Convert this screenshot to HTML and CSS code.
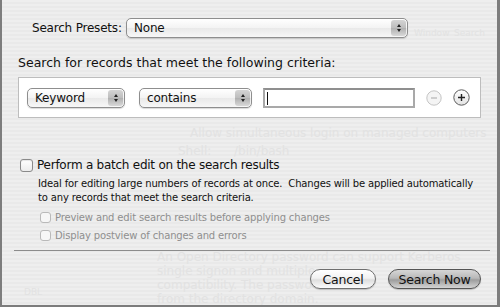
FILE: index.html
```html
<!DOCTYPE html>
<html>
<head>
<meta charset="utf-8">
<link rel="stylesheet" href="styles.css">
</head>
<body>
<div class="sheet">
  <div class="ghost">
    <span class="g g1">Window</span>
    <span class="g g2">Search</span>
    <span class="g g3">Allow simultaneous login on managed computers</span>
    <span class="g g4">Shell:</span>
    <span class="g g5">/bin/bash</span>
    <span class="g g6">An Open Directory password can support Kerberos</span>
    <span class="g g6b">single signon and multiple</span>
    <span class="g g6c">compatibility. The passwo</span>
    <span class="g g6d">from the directory domain.</span>
    <span class="g g7">DBL</span>
  </div>

  <div class="presets">
    <span class="label">Search Presets:</span>
    <div class="popup popup-presets"><span class="ptext">None</span><span class="arrows"><i class="up"></i><i class="down"></i></span></div>
  </div>

  <div class="heading">Search for records that meet the following criteria:</div>

  <div class="criteria">
    <div class="popup popup-keyword"><span class="ptext">Keyword</span><span class="arrows"><i class="up"></i><i class="down"></i></span></div>
    <div class="popup popup-contains"><span class="ptext">contains</span><span class="arrows"><i class="up"></i><i class="down"></i></span></div>
    <div class="field"><span class="caret"></span></div>
    <span class="round minus"><svg viewBox="0 0 16 16" width="16" height="16"><circle cx="8" cy="8" r="7.2" fill="#f4f4f4" stroke="#c4c4c4" stroke-width="1"/><path d="M5 8h6" stroke="#b8b8b8" stroke-width="1.3"/></svg></span>
    <span class="round plus"><svg viewBox="0 0 17 17" width="17" height="17"><defs><linearGradient id="pg" x1="0" y1="0" x2="0" y2="1"><stop offset="0" stop-color="#ffffff"/><stop offset="1" stop-color="#e2e2e2"/></linearGradient></defs><circle cx="8.5" cy="8.5" r="7.7" fill="url(#pg)" stroke="#5c5c5c" stroke-width="1"/><path d="M5 8.5h7M8.5 5v7" stroke="#222" stroke-width="1.4"/></svg></span>
  </div>

  <div class="batch">
    <span class="check big"></span>
    <span class="batch-label">Perform a batch edit on the search results</span>
  </div>
  <p class="desc">Ideal for editing large numbers of records at once.&nbsp; Changes will be applied automatically<br>to any records that meet the search criteria.</p>
  <div class="sub">
    <div class="subrow"><span class="check small"></span><span>Preview and edit search results before applying changes</span></div>
    <div class="subrow"><span class="check small"></span><span>Display postview of changes and errors</span></div>
  </div>

  <div class="sep"></div>

  <div class="buttons">
    <span class="btn cancel">Cancel</span>
    <span class="btn default">Search Now</span>
  </div>
</div>
</body>
</html>
```

FILE: styles.css
```css
* { box-sizing: border-box; }
html, body { margin: 0; padding: 0; }
body {
  width: 500px;
  height: 307px;
  overflow: hidden;
  font-family: "DejaVu Sans", "Liberation Sans", sans-serif;
  color: #111;
}
.sheet {
  position: relative;
  width: 500px;
  height: 307px;
  border-left: 2px solid #7d7d7d;
  border-right: 3px solid #7d7d7d;
  border-bottom: 2px solid #7d7d7d;
  background-color: #ececec;
  background-image: repeating-linear-gradient(180deg, #eeeeee 0, #eeeeee 2px, #e9e9e9 2px, #e9e9e9 4px);
  padding-left: 16px;
  overflow: hidden;
}
.ghost { position: absolute; inset: 0; pointer-events: none; }
.g { position: absolute; color: #e2e2e2; font-size: 12px; line-height: 13px; white-space: nowrap; }
.g1 { left: 412px; top: 28px; font-size: 9px; line-height: 10px; }
.g2 { left: 452px; top: 28px; font-size: 9px; line-height: 10px; }
.g3 { left: 188px; top: 127px; }
.g4 { left: 176px; top: 145px; }
.g5 { left: 232px; top: 145px; }
.g6 { left: 155px; top: 251px; }
.g6b { left: 155px; top: 265px; }
.g6c { left: 155px; top: 279px; }
.g6d { left: 155px; top: 293px; }
.g7 { left: 22px; top: 287px; font-size: 9px; line-height: 10px; }

.presets, .heading, .criteria, .batch, .desc, .sub, .sep, .buttons { position: relative; }

.presets {
  display: flex;
  align-items: center;
  padding-top: 17px;
  padding-left: 14px;
  height: 38px;
}
.label { font-size: 12px; letter-spacing: -0.2px; width: 94px; }

.popup {
  display: flex;
  align-items: center;
  height: 20px;
  border: 1px solid #8e8e8e;
  border-radius: 5px;
  background: linear-gradient(#ffffff, #f3f3f3 50%, #e9e9e9 51%, #f7f7f7);
  box-shadow: 0 1px 1px rgba(0,0,0,0.15);
  font-size: 12px;
  letter-spacing: -0.2px;
  overflow: hidden;
}
.ptext { flex: 1; padding-left: 7px; }
.arrows {
  width: 15px;
  height: 16px;
  margin-right: 1px;
  border-radius: 3px;
  background: linear-gradient(#d4d4d4, #bdbdbd 50%, #b0b0b0 51%, #d8d8d8);
  display: flex;
  flex-direction: column;
  align-items: center;
  justify-content: center;
  gap: 2px;
}
.arrows i { width: 0; height: 0; border-left: 2.5px solid transparent; border-right: 2.5px solid transparent; }
.arrows .up { border-bottom: 3.5px solid #222; }
.arrows .down { border-top: 3.5px solid #222; }
.popup-presets { width: 282px; }

.heading {
  margin-top: 17px;
  font-size: 12.5px;
  height: 15px;
  line-height: 15px;
}
.criteria {
  margin-top: 7px;
  width: 463px;
  height: 41px;
  background: #fff;
  border: 1px solid #bdbdbd;
  display: flex;
  align-items: center;
  padding-left: 8px;
}
.popup-keyword { width: 98px; }
.popup-contains { width: 113px; margin-left: 14px; }
.field {
  margin-left: 11px;
  width: 152px;
  height: 20px;
  border: 2px solid #a9a9a9;
  border-top-color: #8f8f8f;
  background: #fff;
  position: relative;
}
.caret { position: absolute; left: 2px; top: 2px; width: 1px; height: 13px; background: #111; }
.round { display: flex; margin-left: 11px; }
.round.plus { margin-left: 11px; }

.batch {
  margin-top: 40px;
  display: flex;
  align-items: center;
  height: 14px;
  padding-left: 2px;
}
.check {
  display: inline-block;
  border: 1px solid #8a8a8a;
  border-radius: 3px;
  background: linear-gradient(#ffffff, #ececec);
  box-shadow: inset 0 1px 1px rgba(0,0,0,0.1);
}
.check.big { width: 13px; height: 13px; }
.batch-label { margin-left: 4px; font-size: 12px; letter-spacing: -0.25px; }
.desc {
  margin: 5px 0 0 20px;
  font-size: 10px;
  line-height: 14px;
  letter-spacing: -0.15px;
}
.sub { margin-top: 3px; padding-left: 22px; }
.subrow {
  display: flex;
  align-items: center;
  height: 18px;
  font-size: 10px;
  color: #8f8f8f;
  letter-spacing: -0.15px;
}
.check.small { width: 11px; height: 11px; border-color: #b9b9b9; margin-right: 4px; background: #f6f6f6; box-shadow: none; }
.sep {
  margin: 6px 0 0 -4px;
  width: 476px;
  height: 1px;
  background: #8c8c8c;
}
.buttons {
  margin-top: 18px;
  display: flex;
  padding-left: 292px;
  gap: 12px;
}
.btn {
  display: inline-flex;
  align-items: center;
  justify-content: center;
  height: 20px;
  border-radius: 10px;
  border: 1px solid #6f6f6f;
  font-size: 12.5px;
  letter-spacing: -0.2px;
  box-shadow: 0 1px 1px rgba(0,0,0,0.2);
}
.cancel {
  width: 66px;
  background: linear-gradient(#ffffff, #f2f2f2 45%, #dedede 55%, #fbfbfb);
}
.default {
  width: 93px;
  background: linear-gradient(#d6d6d6, #b9b9b9 45%, #9d9d9d 55%, #d4d4d4);
  border-color: #555;
}
```
